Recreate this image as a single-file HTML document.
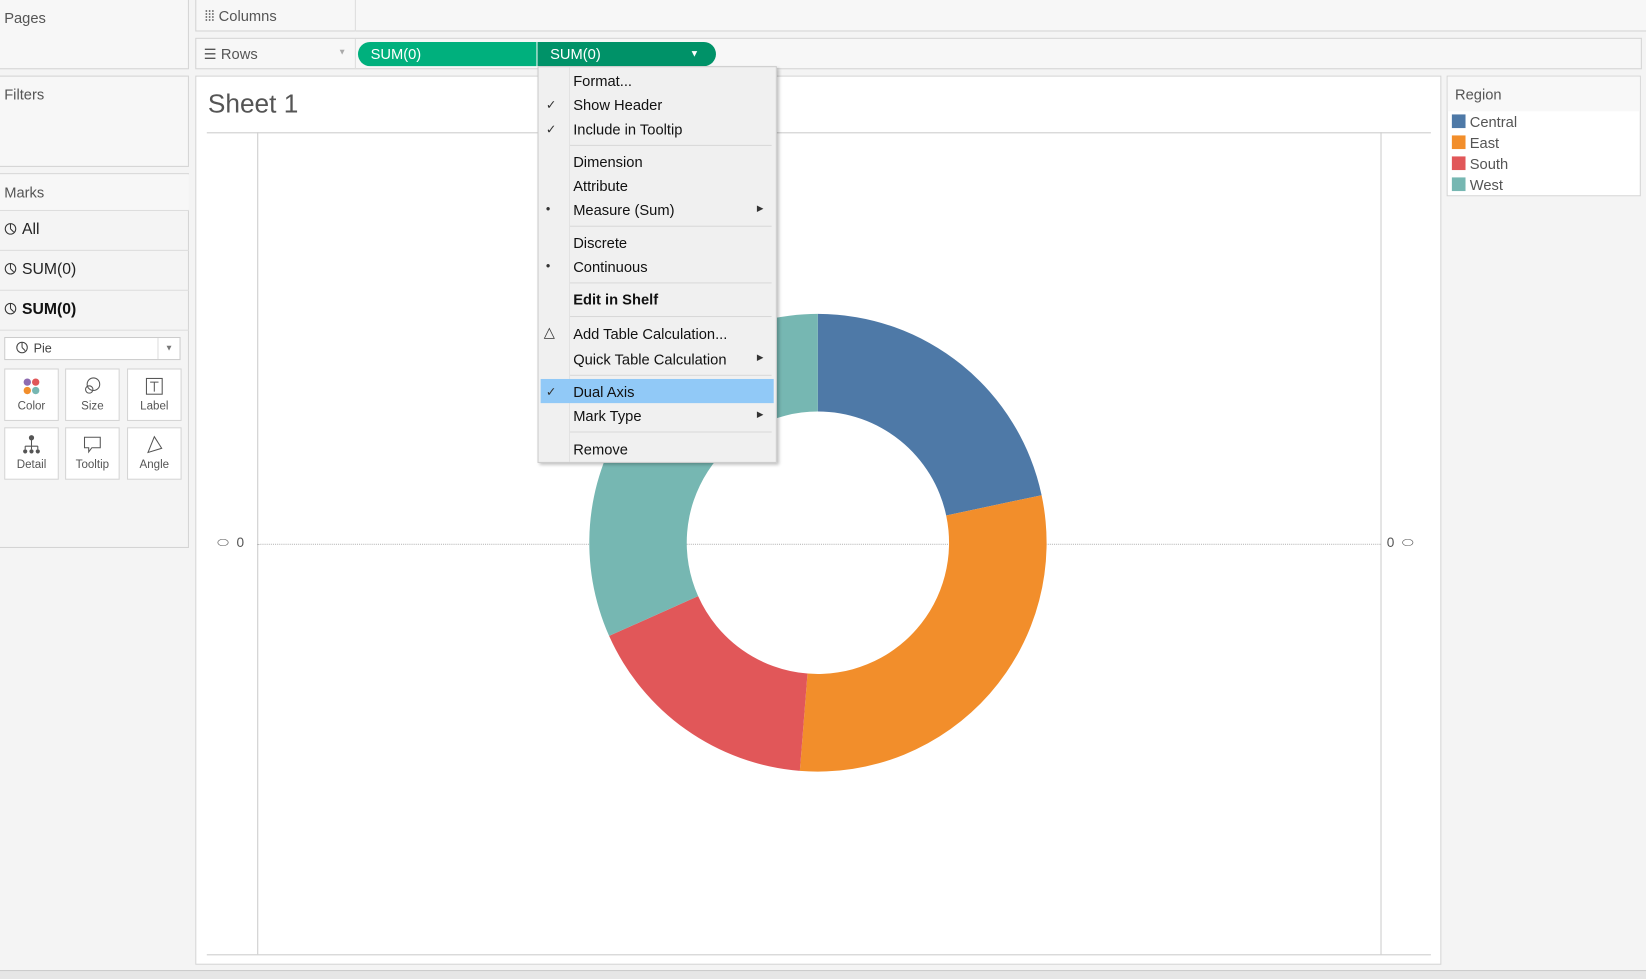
<!DOCTYPE html>
<html><head><meta charset="utf-8"><style>
html,body{margin:0;padding:0;width:1646px;height:977px;overflow:hidden;background:#f4f4f4}
#w{position:absolute;left:0;top:0;width:1568px;height:931px;transform:scale(1.0498);transform-origin:0 0;font-family:"Liberation Sans",sans-serif;color:#333}
.a{position:absolute}
.p{position:absolute;background:#f7f7f7;border:1px solid #d4d4d4;box-sizing:border-box}
.t{font-size:14px;color:#555}
.card{position:absolute;background:#fff;border:1px solid #d4d4d4;box-sizing:border-box;width:52px;text-align:center;font-size:11px;color:#555}
.mi{position:absolute;left:33px;font-size:14px;color:#111}
.sep{position:absolute;left:30px;width:192px;height:1px;background:#d8d8d8}
.mk{position:absolute;left:7px;font-size:12px;color:#333}
.pi{display:inline-block;vertical-align:-1px;margin-right:5px}
</style></head><body><div id="w">
<div class="p" style="left:-1px;top:-1px;width:181px;height:67px"><span class="a t" style="left:4px;top:9px">Pages</span></div>
<div class="p" style="left:-1px;top:72px;width:181px;height:87px"><span class="a t" style="left:4px;top:9px">Filters</span></div>
<div class="p" style="left:-1px;top:165px;width:181px;height:357px;background:#f4f4f4">
<div class="a" style="left:0;top:0;width:180px;height:34px;background:#f7f7f7;border-bottom:1px solid #ddd"></div>
<span class="a t" style="left:4px;top:9px">Marks</span>
<span class="a" style="left:4px;top:44px;font-size:15px;color:#222"><svg class="pi" width="12" height="12" fill="none" stroke="#333"><circle cx="6" cy="6" r="5"/><path d="M6 6V1M6 6l3 3"/></svg>All</span>
<div class="a" style="left:0;top:72px;width:180px;height:1px;background:#ddd"></div>
<span class="a" style="left:4px;top:82px;font-size:15px;color:#222"><svg class="pi" width="12" height="12" fill="none" stroke="#333"><circle cx="6" cy="6" r="5"/><path d="M6 6V1M6 6l3 3"/></svg>SUM(0)</span>
<div class="a" style="left:0;top:110px;width:180px;height:1px;background:#ddd"></div>
<span class="a" style="left:4px;top:120px;font-size:15px;color:#111;font-weight:bold"><svg class="pi" width="12" height="12" fill="none" stroke="#333"><circle cx="6" cy="6" r="5"/><path d="M6 6V1M6 6l3 3"/></svg>SUM(0)</span>
<div class="a" style="left:0;top:148px;width:180px;height:1px;background:#ddd"></div>
<div class="a" style="left:4px;top:155px;width:168px;height:22px;background:#fff;border:1px solid #ccc;box-sizing:border-box;font-size:12px;color:#444;line-height:20px;padding-left:10px"><svg class="pi" width="12" height="12" fill="none" stroke="#444"><circle cx="6" cy="6" r="5"/><path d="M6 6V1M6 6l3 3"/></svg>Pie<span style="position:absolute;right:0;top:0;width:20px;border-left:1px solid #ddd;text-align:center;font-size:8px;color:#777">▼</span></div>
<div class="card" style="left:4px;top:185px;height:50px"><svg width="20" height="20" style="margin-top:6px"><circle cx="6" cy="6" r="3.5" fill="#8e6bb0"/><circle cx="14" cy="6" r="3.5" fill="#e15759"/><circle cx="6" cy="14" r="3.5" fill="#f28e2b"/><circle cx="14" cy="14" r="3.5" fill="#76b7b2"/></svg><div>Color</div></div>
<div class="card" style="left:62px;top:185px;height:50px"><svg width="20" height="20" style="margin-top:6px" fill="none" stroke="#555"><circle cx="11" cy="8" r="6"/><circle cx="7" cy="13" r="3.5"/></svg><div>Size</div></div>
<div class="card" style="left:121px;top:185px;height:50px"><svg width="20" height="20" style="margin-top:6px" fill="none" stroke="#555"><rect x="2.5" y="2.5" width="15" height="15"/><path d="M6 6h8M10 6v9"/></svg><div>Label</div></div>
<div class="card" style="left:4px;top:241px;height:50px"><svg width="20" height="20" style="margin-top:6px" fill="#555" stroke="#555"><circle cx="10" cy="3" r="2"/><path d="M10 5v6M4 11h12M4 11v3M10 11v3M16 11v3" fill="none"/><circle cx="4" cy="16" r="1.5"/><circle cx="10" cy="16" r="1.5"/><circle cx="16" cy="16" r="1.5"/></svg><div>Detail</div></div>
<div class="card" style="left:62px;top:241px;height:50px"><svg width="20" height="20" style="margin-top:6px" fill="none" stroke="#555"><path d="M2.5 2.5h15v10h-8l-3 4v-4h-4z"/></svg><div>Tooltip</div></div>
<div class="card" style="left:121px;top:241px;height:50px"><svg width="20" height="20" style="margin-top:6px" fill="none" stroke="#555"><path d="M10 2l7 11-13 4z"/></svg><div>Angle</div></div>
</div>
<div class="p" style="left:186px;top:-1px;width:1390px;height:31px"><div class="a" style="left:151px;top:0;width:1px;height:30px;background:#ddd"></div><span class="a t" style="left:8px;top:7px">⦙⦙⦙ Columns</span></div>
<div class="p" style="left:186px;top:36px;width:1378px;height:30px;background:#f7f7f7"><div class="a" style="left:151px;top:0;width:1px;height:29px;background:#ddd"></div><span class="a t" style="left:7px;top:6px">☰ Rows</span><span class="a" style="left:135px;top:8px;font-size:8px;color:#aaa">▼</span>
<div class="a" style="left:154px;top:3px;width:170px;height:23px;background:#00b07d;border-radius:12px 0 0 12px;color:#fff;font-size:14px;line-height:23px;padding-left:12px;box-sizing:border-box">SUM(0)</div>
<div class="a" style="left:325px;top:3px;width:170px;height:23px;background:#009268;border-radius:0 12px 12px 0;color:#fff;font-size:14px;line-height:23px;padding-left:12px;box-sizing:border-box">SUM(0)<span style="position:absolute;right:16px;top:0;font-size:9px">▼</span></div>
</div>
<div class="a" style="left:186px;top:72px;width:1187px;height:847px;background:#fff;border:1px solid #d4d4d4;box-sizing:border-box">
<span class="a" style="left:11px;top:12px;font-size:25px;color:#555">Sheet 1</span>
<div class="a" style="left:10px;top:53px;width:1166px;height:1px;background:#ccc"></div>
<div class="a" style="left:10px;top:836px;width:1166px;height:1px;background:#ccc"></div>
<div class="a" style="left:58px;top:53px;width:1px;height:783px;background:#ccc"></div>
<div class="a" style="left:1128px;top:53px;width:1px;height:783px;background:#ccc"></div>
<div class="a" style="left:58px;top:445px;width:1070px;border-top:1px dotted #bbb"></div>
<span class="a" style="left:20px;top:436px;font-size:13px;color:#555">⬭&nbsp; 0</span>
<span class="a" style="left:1134px;top:436px;font-size:13px;color:#555">0 &nbsp;⬭</span>
</div>
<svg class="a" style="left:0;top:0" width="1568" height="931">
<path d="M779 299 A218 218 0 0 1 992.2 471.7 L901.3 491 A125 125 0 0 0 779 392Z" fill="#4e79a7"/>
<path d="M992.2 471.7 A218 218 0 0 1 761.9 734.3 L769.2 641.6 A125 125 0 0 0 901.3 491Z" fill="#f28e2b"/>
<path d="M761.9 734.3 A218 218 0 0 1 580.2 605.7 L665 567.9 A125 125 0 0 0 769.2 641.6Z" fill="#e15759"/>
<path d="M580.2 605.7 A218 218 0 0 1 779 299 L779 392 A125 125 0 0 0 665 567.9Z" fill="#76b7b2"/>
</svg>
<div class="a" style="left:1378px;top:72px;width:185px;height:115px;background:#fff;border:1px solid #d4d4d4;box-sizing:border-box">
<div class="a" style="left:0;top:0;width:183px;height:33px;background:#f8f8f8"></div>
<span class="a t" style="left:7px;top:9px">Region</span>
<div class="a" style="left:4px;top:36px;width:13px;height:13px;background:#4e79a7"></div><span class="a t" style="left:21px;top:35px">Central</span>
<div class="a" style="left:4px;top:56px;width:13px;height:13px;background:#f28e2b"></div><span class="a t" style="left:21px;top:55px">East</span>
<div class="a" style="left:4px;top:76px;width:13px;height:13px;background:#e15759"></div><span class="a t" style="left:21px;top:75px">South</span>
<div class="a" style="left:4px;top:96px;width:13px;height:13px;background:#76b7b2"></div><span class="a t" style="left:21px;top:95px">West</span>
</div>
<div class="a" style="left:0;top:924px;width:1568px;height:8px;background:#e6e6e6;border-top:1px solid #ccc"></div>
<div class="a" style="left:512px;top:63px;width:228px;height:378px;background:#f0f0f0;border:1px solid #ccc;box-sizing:border-box;box-shadow:2px 2px 3px rgba(0,0,0,.25)">
<div class="a" style="left:29px;top:0;width:1px;height:376px;background:#e2e2e2"></div>
<div class="a" style="left:2px;top:297px;width:222px;height:23px;background:#91c9f7"></div>
<span class="mi" style="top:5px">Format...</span>
<span class="mi" style="top:28px">Show Header</span><span class="mk" style="top:29px">✓</span>
<span class="mi" style="top:51px">Include in Tooltip</span><span class="mk" style="top:52px">✓</span>
<div class="sep" style="top:74px"></div>
<span class="mi" style="top:82px">Dimension</span>
<span class="mi" style="top:105px">Attribute</span>
<span class="mi" style="top:128px">Measure (Sum)</span><span class="mk" style="top:128px">•</span><span class="a" style="left:208px;top:130px;font-size:8px">▶</span>
<div class="sep" style="top:151px"></div>
<span class="mi" style="top:159px">Discrete</span>
<span class="mi" style="top:182px">Continuous</span><span class="mk" style="top:182px">•</span>
<div class="sep" style="top:205px"></div>
<span class="mi" style="top:213px;font-weight:bold">Edit in Shelf</span>
<div class="sep" style="top:237px"></div>
<span class="mi" style="top:246px">Add Table Calculation...</span><span class="mk" style="top:244px;font-size:14px;left:5px">△</span>
<span class="mi" style="top:270px">Quick Table Calculation</span><span class="a" style="left:208px;top:272px;font-size:8px">▶</span>
<div class="sep" style="top:293px"></div>
<span class="mi" style="top:301px">Dual Axis</span><span class="mk" style="top:302px">✓</span>
<span class="mi" style="top:324px">Mark Type</span><span class="a" style="left:208px;top:326px;font-size:8px">▶</span>
<div class="sep" style="top:347px"></div>
<span class="mi" style="top:356px">Remove</span>
</div>
</div></body></html>
